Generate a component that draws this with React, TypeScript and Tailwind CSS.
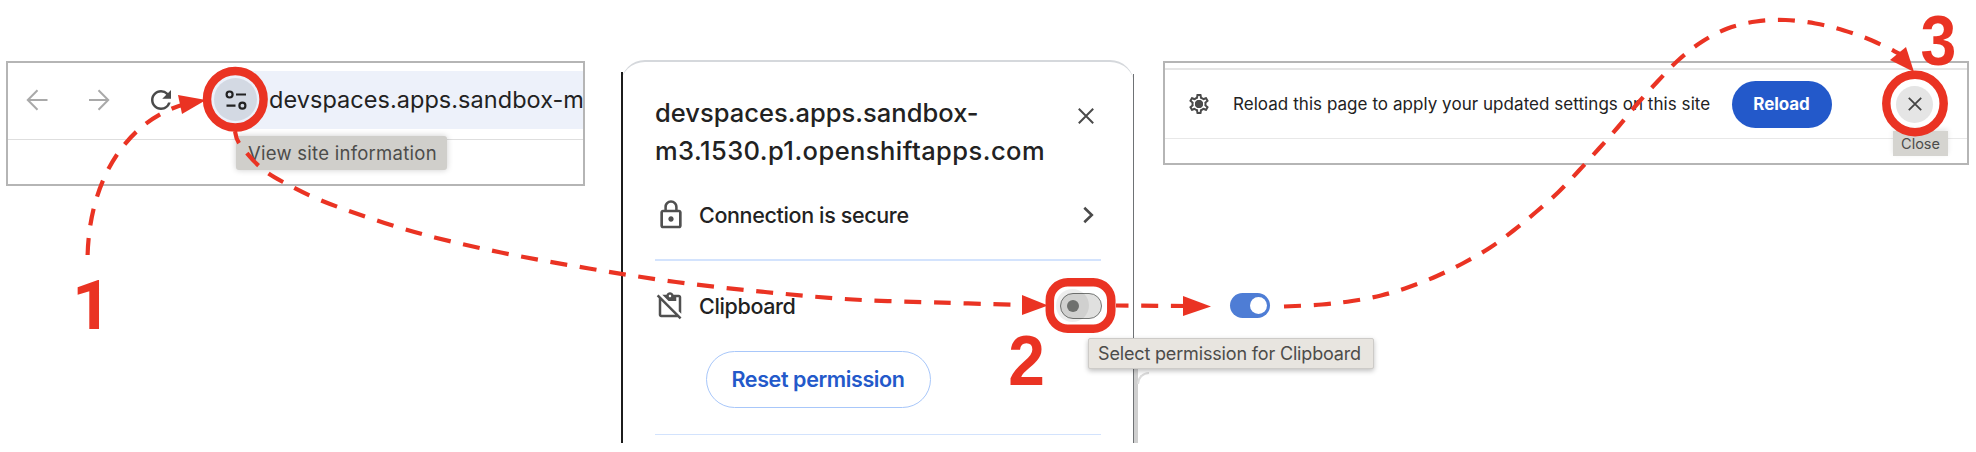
import React from "react";
import {
  MdRefresh,
  MdLockOutline,
  MdOutlineContentPasteOff,
  MdOutlineSettings,
} from "react-icons/md";

type Point = [number, number];

const RED = "#ea3323";

/** Smooth curve through all points (Catmull-Rom converted to cubic Béziers). */
function smooth(points: Point[]): string {
  let d = `M${points[0][0]} ${points[0][1]}`;
  for (let i = 0; i < points.length - 1; i++) {
    const p0 = points[i - 1] ?? points[i];
    const p1 = points[i];
    const p2 = points[i + 1];
    const p3 = points[i + 2] ?? p2;
    d += ` C${p1[0] + (p2[0] - p0[0]) / 6} ${p1[1] + (p2[1] - p0[1]) / 6} ${p2[0] - (p3[0] - p1[0]) / 6} ${p2[1] - (p3[1] - p1[1]) / 6} ${p2[0]} ${p2[1]}`;
  }
  return d;
}

const siteInfoToToggle: Point[] = [
  [235, 131], [239, 143], [259, 166], [283, 182], [330, 204], [414.5, 232], [501, 252.5],
  [589, 268.5], [676, 282], [765, 292], [853, 299.5], [943, 302.7], [1022, 305],
];

const toggleToClose: Point[] = [
  [1284, 306.5], [1322, 304.5], [1352, 301], [1381, 295.5], [1409, 287], [1437, 276],
  [1463.5, 263], [1489.5, 248], [1513.5, 230.5], [1536, 212], [1558.5, 192], [1579, 170.5],
  [1599, 148.5], [1618.5, 126.5], [1638, 103], [1657.5, 81.5], [1678.5, 60], [1701.5, 42],
  [1727.5, 28.5], [1756, 21.5], [1785.5, 20], [1815.5, 23.5], [1844, 30.5], [1872, 40.5], [1900, 54],
];

function AddressBar() {
  return (
    <section className="mt-[61px] flex h-[125px] w-[579px] shrink-0 flex-col overflow-hidden border-2 border-[#b5b5b5] bg-white">
      <div className="flex h-[77px] shrink-0 items-center border-b border-[#dedede] pb-[3px]">
        <svg className="ml-[18px] h-[22px] w-[22px] shrink-0" viewBox="0 0 22 22" fill="none" stroke="#a9a9a9" strokeWidth="2">
          <path d="M21.500 11H2M11.5 1.3L1.8 11l9.7 9.7" />
        </svg>
        <svg className="ml-[40px] h-[22px] w-[22px] shrink-0" viewBox="0 0 22 22" fill="none" stroke="#a9a9a9" strokeWidth="2">
          <path d="M1 11h19M10.5 1.3l9.7 9.7-9.7 9.7" />
        </svg>
        <MdRefresh className="ml-[36px] h-[30px] w-[30px] shrink-0 text-[#4a4a4a]" />
        <div className="ml-[31px] flex h-[58px] flex-1 items-center rounded-l-full bg-[#edf1fa]">
          <span className="ml-[7px] flex h-[43px] w-[43px] shrink-0 items-center justify-center rounded-full bg-[#d3d9e3]">
            <svg className="h-[22px] w-[22px]" viewBox="0 0 22 22" fill="none" stroke="#222" strokeWidth="2.2">
              <circle cx="4.6" cy="5.5" r="3" />
              <path d="M11 5.5h10M1.5 16.7h9" />
              <circle cx="17.4" cy="16.7" r="3" />
            </svg>
          </span>
          <span className="ml-[12px] whitespace-nowrap text-[23.5px] leading-none text-[#222] tracking-[0.04px]">
            devspaces.apps.sandbox-m
          </span>
        </div>
      </div>
    </section>
  );
}

function PermissionPopup() {
  return (
    <section className="relative ml-[36px] mt-[60px] flex h-[383px] w-[513px] shrink-0 flex-col rounded-t-[24px] border-t-2 border-[#d5d8dc] bg-white pl-[34px] pr-[33px]">
      <span className="absolute left-0 top-[10px] h-[371px] w-[2px] bg-[#1c1c1c]" />
      <span className="absolute right-0 top-[12px] h-[369px] w-px bg-[#6f7275]" />
      <div className="mt-[32px] flex h-[80px] items-start justify-between">
        <h1 className="text-[25.5px] font-medium leading-[38.3px] text-[#222]">
          <span className="block tracking-[0.02px]">devspaces.apps.sandbox-</span>
          <span className="block tracking-[0.45px]">m3.1530.p1.openshiftapps.com</span>
        </h1>
        <svg className="mr-[7px] mt-[14px] h-4 w-4" viewBox="0 0 16 16" stroke="#4a4a4a" strokeWidth="2">
          <path d="M.8.8l14.4 14.4M15.2.8L.8 15.2" />
        </svg>
      </div>
      <div className="mt-[21px] flex h-[40px] items-center">
        <MdLockOutline className="h-[32px] w-[32px] text-[#505050]" />
        <span className="ml-[12px] text-[21.5px] font-medium text-[#222] tracking-[-0.36px]">Connection is secure</span>
        <svg className="ml-auto mr-[7px] h-[18px] w-[11px]" viewBox="0 0 11 18" fill="none" stroke="#4a4a4a" strokeWidth="2.6">
          <path d="M1.3 1.7L8.8 9l-7.5 7.3" />
        </svg>
      </div>
      <div className="mt-[24px] h-[1.5px] shrink-0 bg-[#d3e3fd]" />
      <div className="mt-[25px] flex h-[40px] items-center">
        <MdOutlineContentPasteOff className="h-[30px] w-[30px] text-[#505050]" />
        <span className="ml-[14px] pt-[2px] text-[21.5px] font-medium text-[#222] tracking-[-0.36px]">Clipboard</span>
        <span className="-mr-px ml-auto flex h-[26px] w-[42px] items-center rounded-full border-[1.5px] border-[#757775] bg-[#e0e0df]">
          <span className="-ml-[5px] flex h-[33px] w-[33px] items-center justify-center rounded-full bg-black/[0.07]">
            <span className="h-[12px] w-[12px] rounded-full bg-[#6e706e]" />
          </span>
        </span>
      </div>
      <button className="ml-[51px] mt-[25px] flex h-[57px] w-[225px] shrink-0 items-center justify-center rounded-full border-[1.5px] border-[#a8c7fa] pr-px pt-px text-[21.5px] font-semibold text-[#2359ca] tracking-[-0.4px]">
        Reset permission
      </button>
      <div className="mt-[26px] h-[1.5px] shrink-0 bg-[#d3e3fd]" />
    </section>
  );
}

function ReloadBar() {
  return (
    <section className="ml-[29px] mt-[61px] flex h-[104px] w-[806px] shrink-0 flex-col border-2 border-[#b5b5b5] bg-white pt-[5px]">
      <div className="flex h-[71px] shrink-0 items-center border-b border-t-2 border-b-[#e8e8e8] border-t-[#e5e5e5]">
        <span className="relative ml-[22px] flex h-[24px] w-[24px] items-center justify-center">
          <MdOutlineSettings className="h-[24px] w-[24px] text-[#4a4a4a]" />
          <span className="absolute h-[8px] w-[8px] rounded-full bg-[#4a4a4a]" />
        </span>
        <span className="ml-[22px] w-[499px] whitespace-nowrap pt-[2px] text-[17px] text-[#222] tracking-[0.05px]">
          Reload this page to apply your updated settings on this site
        </span>
        <button className="flex h-[47px] w-[100px] items-center justify-center rounded-full bg-[#2359ca] pr-px pt-[2px] text-[17px] font-bold text-white tracking-[-0.1px]">
          Reload
        </button>
        <span className="ml-[64px] flex h-[37px] w-[37px] items-center justify-center rounded-full bg-[#e5e5e5]">
          <svg className="h-[14px] w-[14px]" viewBox="0 0 14 14" stroke="#454545" strokeWidth="1.8">
            <path d="M.8.8l12.4 12.4M13.2.8L.8 13.2" />
          </svg>
        </span>
      </div>
    </section>
  );
}

export default function App() {
  return (
    <main className="relative flex h-[452px] w-[1976px] items-start overflow-hidden bg-white pl-[6px] font-['Inter',sans-serif]">
      <AddressBar />
      <PermissionPopup />
      <ReloadBar />

      <div className="absolute left-[236px] top-[136px] flex h-[34px] w-[211px] items-center whitespace-nowrap rounded-[3px] bg-[#d0cfcb] pl-[12px] pt-px text-[18.5px] text-[#4c4c4a] tracking-[0.26px] shadow-[0_0_6px_rgba(0,0,0,0.2)]">
        View site information
      </div>
      <div className="absolute left-[1134px] top-[366px] h-[77px] w-[4px] bg-[#cfcfcf]">
        <span className="absolute left-[3px] top-[6px] h-[12px] w-[12px] rounded-tl-[12px] border-l-2 border-t-2 border-[#dcdcdc]" />
      </div>
      <div className="absolute left-[1088px] top-[338px] flex h-[31px] w-[286px] items-center whitespace-nowrap rounded-[2px] border border-[#cdcbc8] bg-[#e8e5e0] pl-[9px] text-[18px] text-[#4c4c4a] tracking-[-0.16px] shadow-[0_2px_5px_rgba(0,0,0,0.25)]">
        Select permission for Clipboard
      </div>
      <div className="absolute left-[1230px] top-[293px] flex h-[25px] w-[40px] items-center justify-end rounded-full bg-[#4e7dd5] pr-[3.5px]">
        <span className="h-[17px] w-[17px] rounded-full bg-white" />
      </div>
      <div className="absolute left-[1893px] top-[131px] flex h-[25px] w-[55px] items-center justify-center bg-[#d5d4d0] text-[14.5px] text-[#4c4c4a] shadow-[0_-2px_5px_rgba(0,0,0,0.1)]">
        Close
      </div>

      <svg className="pointer-events-none absolute inset-0" width="1976" height="452" viewBox="0 0 1976 452" fill="none">
        <g stroke={RED} strokeWidth="4.2" strokeDasharray="17 12.7">
          <path d="M87.6 255C90 170 135 115 190 103" />
          <path d={smooth(siteInfoToToggle)} strokeDashoffset="4" />
          <path d="M1116 305.5L1190 306" strokeDashoffset="4.5" />
          <path d={smooth(toggleToClose)} />
        </g>
        <g fill={RED}>
          <path d="M178 95l28 5-24 14z" />
          <path d="M1022 295l26 10.500-26 9.500z" />
          <path d="M1183 296l28 10.500-28 9.500z" />
          <path d="M1906 47l8 25-24-12z" />
        </g>
        <g stroke={RED} strokeWidth="8.500">
          <circle cx="235.300" cy="99.300" r="28.300" />
          <rect x="1049.800" y="282.300" width="61.500" height="46.500" rx="18" />
          <circle cx="1915" cy="103.500" r="28.700" />
        </g>
      </svg>

      <span className="absolute left-[72px] top-[271px] font-['Roboto',sans-serif] text-[69px] font-bold leading-[69px] text-[#ea3323]">1</span>
      <span className="absolute left-[1007px] top-[326px] scale-x-[0.94] font-['Liberation_Sans',sans-serif] text-[70px] font-bold leading-[70px] text-[#ea3323]">2</span>
      <span className="absolute left-[1919px] top-[6px] scale-x-[0.92] font-['Liberation_Sans',sans-serif] text-[70px] font-bold leading-[70px] text-[#ea3323]">3</span>
    </main>
  );
}
